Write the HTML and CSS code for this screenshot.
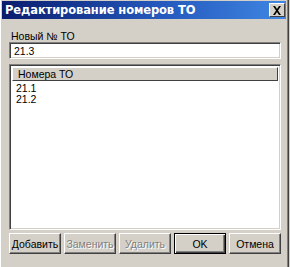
FILE: index.html
```html
<!DOCTYPE html>
<html>
<head>
<meta charset="utf-8">
<link rel="stylesheet" href="styles.css">
</head>
<body>
<div class="window">
  <div class="titlebar">
    <span class="title">Редактирование номеров ТО</span>
    <span class="close">
      <svg width="10" height="9" viewBox="0 0 10 9"><path d="M1 0h2l2 3 2-3h2L6 4.5 9 9H7L5 6 3 9H1l3-4.5z" fill="#000"/></svg>
    </span>
  </div>
  <div class="body">
    <div class="label">Новый № ТО</div>
    <div class="input">21.3</div>
    <div class="list">
      <div class="list-head">Номера ТО</div>
      <div class="list-items">
        <div class="item">21.1</div>
        <div class="item">21.2</div>
      </div>
    </div>
    <div class="buttons">
      <div class="btn">Добавить</div>
      <div class="btn disabled">Заменить</div>
      <div class="btn disabled">Удалить</div>
      <div class="btn default">OK</div>
      <div class="btn">Отмена</div>
    </div>
  </div>
</div>
</body>
</html>
```
FILE: styles.css
```css
html, body {
  margin: 0;
  padding: 0;
  width: 290px;
  height: 267px;
  overflow: hidden;
  background: #d4d0c8;
  font-family: "Liberation Sans", "DejaVu Sans", sans-serif;
  font-size: 10.5px;
  color: #000;
}
.window {
  box-sizing: border-box;
  width: 289px;
  height: 267px;
  border-right: 1px solid #404040;
  box-shadow: inset -1px 0 0 #808080, inset 1px 0 0 #fff;
  padding: 1px 2px 2px 2px;
  display: flex;
  flex-direction: column;
}
.titlebar {
  height: 18px;
  background: linear-gradient(to right, #0a1c6e, #2458bc 55%, #3f86e2);
  display: flex;
  align-items: center;
  justify-content: space-between;
  padding: 0 1px 0 3px;
}
.title {
  color: #fff;
  font-family: "DejaVu Sans", sans-serif;
  font-weight: bold;
  font-size: 11.5px;
  letter-spacing: -0.1px;
}
.close {
  box-sizing: border-box;
  width: 16px;
  height: 14px;
  background: #d4d0c8;
  border-top: 1px solid #fff;
  border-left: 1px solid #fff;
  border-right: 1px solid #404040;
  border-bottom: 1px solid #404040;
  display: flex;
  align-items: center;
  justify-content: center;
}
.body {
  flex: 1;
  display: flex;
  flex-direction: column;
  padding: 11px 5px 5px 7px;
}
.label {
  height: 12px;
  line-height: 12px;
  padding-left: 2px;
}
.input {
  box-sizing: border-box;
  height: 17px;
  background: #fff;
  border-top: 1px solid #808080;
  border-left: 1px solid #808080;
  border-right: 1px solid #fff;
  border-bottom: 1px solid #fff;
  box-shadow: inset 1px 1px 0 #404040, inset -1px -1px 0 #d4d0c8;
  padding: 2px 4px;
  line-height: 12px;
}
.list {
  box-sizing: border-box;
  margin-top: 5px;
  height: 166px;
  background: #fff;
  border-top: 1px solid #808080;
  border-left: 1px solid #808080;
  border-right: 1px solid #fff;
  border-bottom: 1px solid #fff;
  box-shadow: inset 1px 1px 0 #404040, inset -1px -1px 0 #d4d0c8;
  padding: 2px;
  display: flex;
  flex-direction: column;
}
.list-head {
  box-sizing: border-box;
  height: 14px;
  background: #d4d0c8;
  border-top: 1px solid #fff;
  border-left: 1px solid #fff;
  border-right: 1px solid #404040;
  border-bottom: 1px solid #404040;
  line-height: 12px;
  padding-left: 5px;
}
.list-items {
  padding: 2px 0 0 4px;
}
.item {
  height: 11px;
  line-height: 11px;
}
.buttons {
  display: flex;
  gap: 3px;
  margin-top: 3px;
}
.btn {
  box-sizing: border-box;
  width: 52px;
  height: 21px;
  background: #d4d0c8;
  border-top: 1px solid #fff;
  border-left: 1px solid #fff;
  border-right: 1px solid #404040;
  border-bottom: 1px solid #404040;
  box-shadow: inset -1px -1px 0 #808080;
  display: flex;
  align-items: center;
  justify-content: center;
}
.btn.disabled {
  color: #808080;
  text-shadow: 1px 1px 0 #fff;
}
.btn.default {
  border: 1px solid #000;
  box-shadow: inset 1px 1px 0 #fff, inset -1px -1px 0 #404040, inset -2px -2px 0 #808080;
}
```
